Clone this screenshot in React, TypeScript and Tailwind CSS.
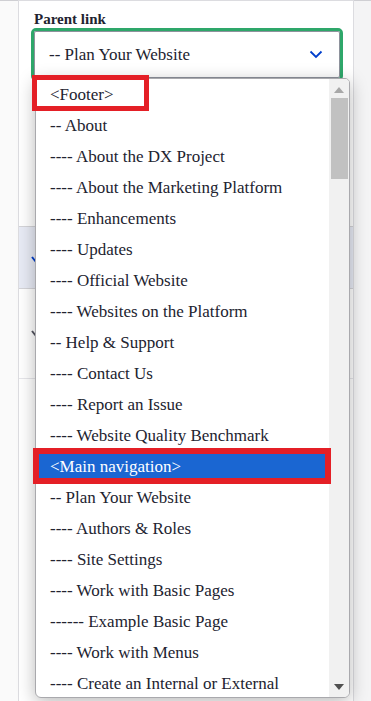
import React from "react";

const items: string[] = [
  "<Footer>",
  "-- About",
  "---- About the DX Project",
  "---- About the Marketing Platform",
  "---- Enhancements",
  "---- Updates",
  "---- Official Website",
  "---- Websites on the Platform",
  "-- Help & Support",
  "---- Contact Us",
  "---- Report an Issue",
  "---- Website Quality Benchmark",
  "<Main navigation>",
  "-- Plan Your Website",
  "---- Authors & Roles",
  "---- Site Settings",
  "---- Work with Basic Pages",
  "------ Example Basic Page",
  "---- Work with Menus",
  "---- Create an Internal or External",
];

export default function App() {
  return (
    <div
      className="relative w-[371px] h-[701px] overflow-hidden bg-[#f7f7f8] flex"
      style={{ fontFamily: '"Liberation Serif", serif' }}
    >
      <div className="w-[18px] shrink-0 border-t border-[#cfcfd3] bg-[#fafafa]" />
      <div className="w-[336px] shrink-0 bg-white border-x border-t border-[#dcdce0] flex flex-col">
        <div className="px-[12px] pt-[10px]">
          <div className="pl-[3px] text-[15px] font-bold text-[#222330] leading-[17px]">Parent link</div>
          <div className="rounded-[5px] border-[3px] border-[#2ea76a] w-[312px]">
            <div className="h-[47px] rounded-[2px] border border-[#8e929c] flex items-center justify-between pl-[14px] pr-[16px] text-[17px] text-[#222330]">
              <span>-- Plan Your Website</span>
              <svg width="14" height="9" viewBox="0 0 14 9" fill="none">
                <path d="M1.5 1.5 L7 7 L12.5 1.5" stroke="#003ecc" strokeWidth="1.8" />
              </svg>
            </div>
          </div>
        </div>
        <div className="h-[146px] border-b border-[#d4d4d8]" />
        <div className="h-[62px] bg-[#e8ebf5] border-b border-[#d4d4d8] flex items-center pl-[12px]">
          <svg width="10" height="8" viewBox="0 0 10 8" className="mt-[4px]">
            <path d="M1 1 L5 6 L9 1" stroke="#003ecc" strokeWidth="2" fill="none" />
          </svg>
        </div>
        <div className="h-[90px] border-b border-[#e6e6ea] flex items-center pl-[12px]">
          <svg width="10" height="8" viewBox="0 0 10 8">
            <path d="M1 1 L5 6 L9 1" stroke="#545560" strokeWidth="2" fill="none" />
          </svg>
        </div>
        <div className="flex-1" />
      </div>
      <div className="flex-1 border-t border-[#cfcfd3] bg-[#f4f4f5]" />

      {/* dropdown list */}
      <div className="absolute left-[35px] top-[78px] w-[315px] h-[620px] bg-white border border-[#a9a9ad] rounded-b-[6px] rounded-tr-[5px] shadow-[0_4px_18px_rgba(0,0,0,0.28)] overflow-hidden">
        <div className="flex flex-col pr-[20px]">
          {items.map((t, i) => (
            <div
              key={i}
              className={
                "h-[31px] shrink-0 flex items-center pl-[14px] text-[17px] whitespace-nowrap " +
                (t === "<Main navigation>" ? "bg-[#1a66d2] text-white" : "text-[#222330]")
              }
            >
              {t}
            </div>
          ))}
        </div>
        <div className="absolute right-0 top-0 bottom-0 w-[20px] bg-[#f1f1f1] flex flex-col items-center">
          <svg width="10" height="6" viewBox="0 0 10 6" className="mt-[8px]">
            <path d="M0 6 L5 0 L10 6 Z" fill="#a8a8a8" />
          </svg>
          <div className="mt-[5px] w-[17px] h-[81px] bg-[#c1c1c1]" />
          <div className="flex-1" />
          <svg width="10" height="6" viewBox="0 0 10 6" className="mb-[7px]">
            <path d="M0 0 L10 0 L5 6 Z" fill="#505050" />
          </svg>
        </div>
      </div>

      {/* annotation boxes */}
      <div className="absolute left-[32px] top-[75px] w-[117px] h-[36px] border-[5px] border-[#e41f26]" />
      <div className="absolute left-[33px] top-[448px] w-[298px] h-[36px] border-[6px] border-[#e41f26]" />
    </div>
  );
}
